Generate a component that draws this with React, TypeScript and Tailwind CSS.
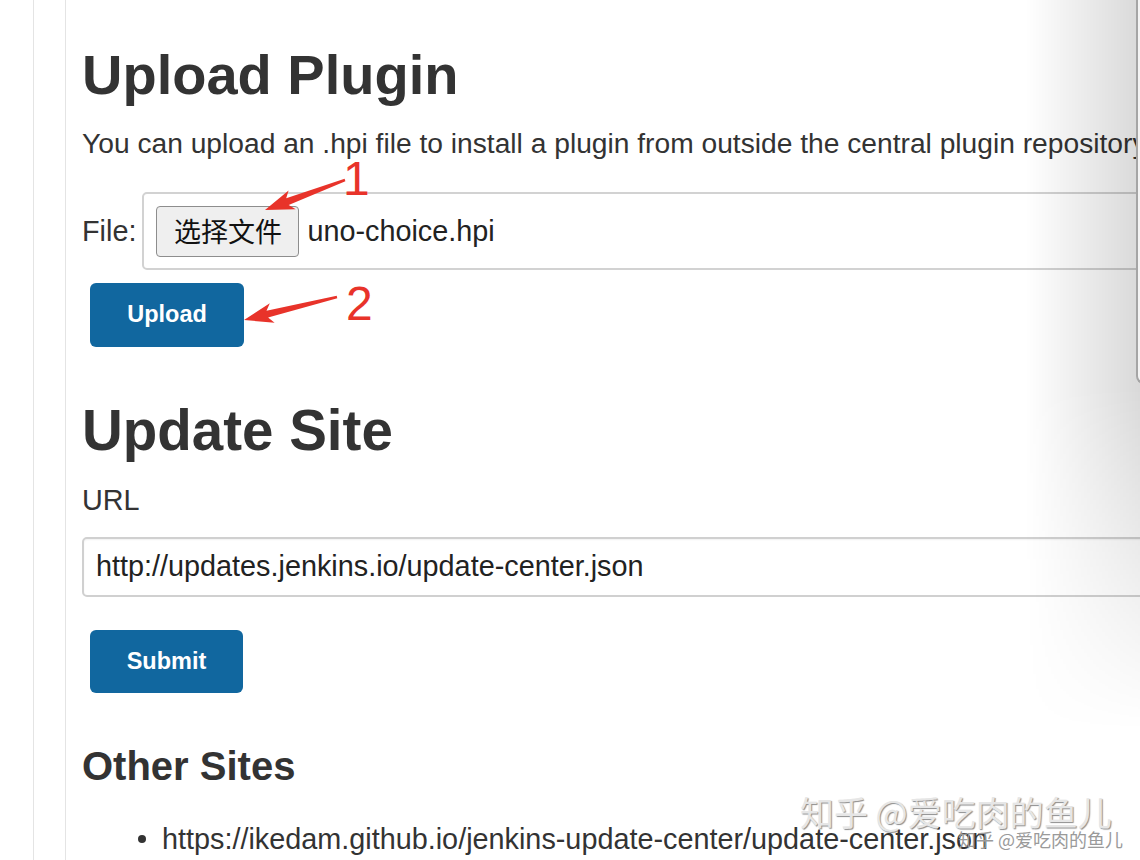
import React from "react";

type Pt = [number, number];

function arrowPoints(tail: Pt, tip: Pt, headLen: number, headW: number, t0: number, t1: number): string {
  const dx = tip[0] - tail[0];
  const dy = tip[1] - tail[1];
  const len = Math.hypot(dx, dy);
  const ux = dx / len;
  const uy = dy / len;
  const nx = -uy;
  const ny = ux;
  const bx = tip[0] - ux * headLen;
  const by = tip[1] - uy * headLen;
  const wx = bx - ux * 5;
  const wy = by - uy * 5;
  const pts: Pt[] = [
    [tail[0] + (nx * t0) / 2, tail[1] + (ny * t0) / 2],
    [bx + (nx * t1) / 2, by + (ny * t1) / 2],
    [wx + (nx * headW) / 2, wy + (ny * headW) / 2],
    [tip[0], tip[1]],
    [wx - (nx * headW) / 2, wy - (ny * headW) / 2],
    [bx - (nx * t1) / 2, by - (ny * t1) / 2],
    [tail[0] - (nx * t0) / 2, tail[1] - (ny * t0) / 2],
  ];
  return pts.map((p) => `${p[0].toFixed(1)},${p[1].toFixed(1)}`).join(" ");
}

const sans = "font-['Liberation_Sans',Arial,'Noto_Sans_CJK_SC',sans-serif]";

export default function App() {
  return (
    <div className={`relative w-[1140px] h-[860px] overflow-hidden bg-white text-[#333333] ${sans}`}>
      <div className="flex h-full">
        <div className="w-[33px] shrink-0" />
        <div className="w-[32px] shrink-0 border-l border-[#e4e4e4]" />
        <div className="flex-1 border-l border-[#e4e4e4] pl-[16px]">
          <h1 className="mt-[47px] h-[55px] text-[56px] font-bold leading-[55px] whitespace-nowrap">
            Upload Plugin
          </h1>
          <p className="mt-[25px] h-[32px] text-[28.2px] leading-[32px] whitespace-nowrap">
            You can upload an .hpi file to install a plugin from outside the central plugin repository.
          </p>
          <div className="mt-[33px] flex items-center">
            <span className="text-[28.8px] leading-[32px]">File:</span>
            <div className="ml-[6px] flex h-[78px] w-[1040px] shrink-0 items-center rounded-[5px] border-2 border-[#d2d2d2] pl-[12px]">
              <div className="flex h-[51px] w-[143px] items-center justify-center rounded-[4px] border border-[#8d8d8d] bg-[#efefef] font-['Noto_Sans_CJK_SC',sans-serif] text-[27px] text-[#111111]">
                选择文件
              </div>
              <span className="ml-[8px] text-[28.8px] leading-[32px] text-[#222222]">uno-choice.hpi</span>
            </div>
          </div>
          <button className="mt-[13px] ml-[8px] flex h-[64px] w-[154px] items-center justify-center rounded-[6px] bg-[#11679f] text-[23.5px] font-bold text-white">
            Upload
          </button>
          <h1 className="mt-[56px] h-[55px] text-[56.5px] font-bold leading-[55px] whitespace-nowrap">
            Update Site
          </h1>
          <div className="mt-[26px] h-[32px] text-[28.8px] leading-[32px]">URL</div>
          <div className="mt-[21px] flex h-[60px] w-[1100px] items-center rounded-[5px] border-2 border-[#d0d0d0] pl-[12px] text-[28.8px] text-[#222222] shadow-[inset_0_1px_2px_rgba(0,0,0,0.06)]">
            http://updates.jenkins.io/update-center.json
          </div>
          <button className="mt-[33px] ml-[8px] flex h-[63px] w-[153px] items-center justify-center rounded-[6px] bg-[#11679f] text-[23.5px] font-bold text-white">
            Submit
          </button>
          <h2 className="mt-[54px] h-[39px] text-[40px] font-bold leading-[39px] whitespace-nowrap">
            Other Sites
          </h2>
          <ul className="mt-[37px]">
            <li className="flex items-center text-[28.8px] leading-[32px] whitespace-nowrap">
              <span className="ml-[56px] mr-[16px] h-[8px] w-[8px] shrink-0 rounded-full bg-[#333333]" />
              https://ikedam.github.io/jenkins-update-center/update-center.json
            </li>
          </ul>
        </div>
      </div>

      {/* right edge shadow of overlapping window */}
      <div className="pointer-events-none absolute right-0 top-0 h-full w-[115px] bg-[linear-gradient(to_right,rgba(0,0,0,0),rgba(0,0,0,0.15))] [mask-image:linear-gradient(to_bottom,black_45%,transparent_85%)]" />
      <div className="pointer-events-none absolute left-[1136px] top-[-10px] h-[394px] w-[20px] rounded-bl-[8px] border-b-2 border-l-2 border-[#a5a5a5] bg-[#f4f4f4]" />

      {/* annotation arrows */}
      <svg className="pointer-events-none absolute left-0 top-0" width="1140" height="860">
        <polygon points={arrowPoints([345, 180], [265, 210], 24, 20, 2.5, 7)} fill="#e8332a" />
        <polygon points={arrowPoints([337, 297], [244, 320], 24, 20, 2.5, 7)} fill="#e8332a" />
      </svg>
      <div className="pointer-events-none absolute left-[343px] top-[155px] text-[48px] leading-none text-[#e8332a]">1</div>
      <div className="pointer-events-none absolute left-[346px] top-[280px] text-[48px] leading-none text-[#e8332a]">2</div>

      {/* watermark */}
      <div className="pointer-events-none absolute left-[800px] top-[795px] whitespace-nowrap font-['Noto_Sans_CJK_SC',sans-serif] text-[34px] leading-none text-[#e6e6e6] [text-shadow:1px_1px_1px_rgba(0,0,0,0.45)]">
        知乎 @爱吃肉的鱼儿
      </div>
      <div className="pointer-events-none absolute left-[958px] top-[830px] whitespace-nowrap font-['Noto_Sans_CJK_SC',sans-serif] text-[18px] leading-none text-[#9a9a9a]">
        知乎 @爱吃肉的鱼儿
      </div>
    </div>
  );
}
